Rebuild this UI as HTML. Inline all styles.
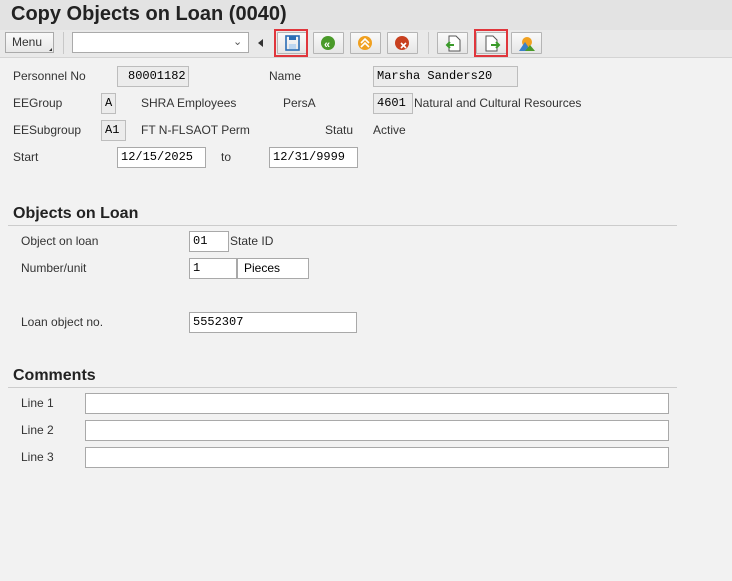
<!DOCTYPE html>
<html><head><meta charset="utf-8"><style>
*{margin:0;padding:0;box-sizing:border-box}
body{width:732px;height:581px;background:#f2f2f2;font-family:"Liberation Sans",Arial,sans-serif;font-size:12px;color:#333;position:relative;overflow:hidden}
.a{position:absolute}
.t{position:absolute;line-height:14px;white-space:nowrap}
.box{position:absolute;height:21px;border:1px solid #a9a9a9;background:#fff;font-family:"Liberation Mono",monospace;font-size:12px;line-height:19px;padding-left:3px;color:#000}
.ro{background:#ececec;border-color:#bdbdbd}
.btn{position:absolute;top:32px;width:31px;height:22px;border:1px solid #b5b5b5;background:linear-gradient(#fafafa,#e6e6e6);border-radius:1px}
.red{position:absolute;top:29px;height:28px;border:2px solid #e0363c}
.hdr{position:absolute;font-size:16px;font-weight:bold;color:#222}
.line{position:absolute;height:1px;background:#ccc}
</style></head><body>
<div class="a" style="left:0;top:0;width:732px;height:30px;background:#e3e3e3"></div>
<div class="t" style="left:11px;top:3px;font-size:20px;line-height:22px;font-weight:bold;color:#222">Copy Objects on Loan (0040)</div>
<div class="a" style="left:0;top:30px;width:732px;height:28px;background:#e9e9e9;border-bottom:1px solid #d4d4d4"></div>
<div class="a" style="left:5px;top:32px;width:49px;height:21px;border:1px solid #aaa;background:linear-gradient(#fafafa,#e8e8e8);font-size:12px;line-height:19px;padding-left:6px">Menu</div>
<div class="a" style="left:49px;top:48px;width:0;height:0;border-left:3px solid transparent;border-bottom:3px solid #333"></div>
<div class="a" style="left:63px;top:32px;width:1px;height:22px;background:#c8c8c8"></div>
<div class="a" style="left:72px;top:32px;width:177px;height:21px;border:1px solid #aaa;background:#fff"></div>
<div class="t" style="left:233px;top:35px;font-size:11px;color:#555">&#8964;</div>
<div class="a" style="left:258px;top:39px;width:0;height:0;border-top:4px solid transparent;border-bottom:4px solid transparent;border-right:5px solid #333"></div>

<div class="btn" style="left:277px"><svg width="29" height="20"><rect x="8" y="3" width="13" height="14" fill="none" stroke="#2a6db5" stroke-width="1.6"/><rect x="11" y="3" width="7" height="4" fill="#2a6db5"/><rect x="11" y="11" width="7" height="5" fill="#bcd6f0"/></svg></div>
<div class="red" style="left:274px;width:34px"></div>
<div class="btn" style="left:313px"><svg width="29" height="20"><circle cx="14" cy="10" r="7" fill="#4a9a2a"/><text x="10" y="15" font-size="11" fill="#fff" font-family="Liberation Sans" font-weight="bold">«</text></svg></div>
<div class="btn" style="left:350px"><svg width="29" height="20"><circle cx="14" cy="10" r="7" fill="#f0a020"/><path d="M10 10l4-4 4 4M10 14l4-4 4 4" stroke="#fff" stroke-width="1.6" fill="none"/></svg></div>
<div class="btn" style="left:387px"><svg width="29" height="20"><circle cx="14" cy="10" r="7" fill="#c8401f"/><path d="M13 10l5 5M18 10l-5 5" stroke="#fff" stroke-width="1.6"/></svg></div>
<div class="a" style="left:428px;top:32px;width:1px;height:22px;background:#c8c8c8"></div>
<div class="btn" style="left:437px"><svg width="29" height="20"><path d="M11 3h7l4 4v11H11z" fill="#fff" stroke="#555"/><path d="M16 12h-6M12 9l-3 3 3 3" stroke="#3a9a2a" stroke-width="2" fill="none"/></svg></div>
<div class="btn" style="left:476px"><svg width="29" height="20"><path d="M9 3h7l4 4v11H9z" fill="#fff" stroke="#555"/><path d="M14 12h7M19 9l3 3-3 3" stroke="#3a9a2a" stroke-width="2" fill="none"/></svg></div>
<div class="red" style="left:474px;width:34px"></div>
<div class="btn" style="left:511px"><svg width="29" height="20"><circle cx="15" cy="9" r="5" fill="#f0a020"/><path d="M7 18l6-9 6 9z" fill="#3a80c8"/><path d="M13 18l5-6 5 6z" fill="#4a9a2a"/></svg></div>

<div class="t" style="left:13px;top:69px">Personnel No</div>
<div class="box ro" style="left:117px;top:66px;width:72px;padding-left:10px">80001182</div>
<div class="t" style="left:269px;top:69px">Name</div>
<div class="box ro" style="left:373px;top:66px;width:145px">Marsha Sanders20</div>

<div class="t" style="left:13px;top:96px">EEGroup</div>
<div class="box ro" style="left:101px;top:93px;width:15px">A</div>
<div class="t" style="left:141px;top:96px">SHRA Employees</div>
<div class="t" style="left:283px;top:96px">PersA</div>
<div class="box ro" style="left:373px;top:93px;width:40px">4601</div>
<div class="t" style="left:414px;top:96px">Natural and Cultural Resources</div>

<div class="t" style="left:13px;top:123px">EESubgroup</div>
<div class="box ro" style="left:101px;top:120px;width:25px">A1</div>
<div class="t" style="left:141px;top:123px">FT N-FLSAOT Perm</div>
<div class="t" style="left:325px;top:123px">Statu</div>
<div class="t" style="left:373px;top:123px">Active</div>

<div class="t" style="left:13px;top:150px">Start</div>
<div class="box" style="left:117px;top:147px;width:89px">12/15/2025</div>
<div class="t" style="left:221px;top:150px">to</div>
<div class="box" style="left:269px;top:147px;width:89px">12/31/9999</div>

<div class="hdr" style="left:13px;top:205px">Objects on Loan</div>
<div class="line" style="left:8px;top:225px;width:669px"></div>
<div class="t" style="left:21px;top:234px">Object on loan</div>
<div class="box" style="left:189px;top:231px;width:40px">01</div>
<div class="t" style="left:230px;top:234px">State ID</div>
<div class="t" style="left:21px;top:261px">Number/unit</div>
<div class="box" style="left:189px;top:258px;width:48px">1</div>
<div class="box" style="left:237px;top:258px;width:72px;font-family:'Liberation Sans',sans-serif;padding-left:6px">Pieces</div>
<div class="t" style="left:21px;top:315px">Loan object no.</div>
<div class="box" style="left:189px;top:312px;width:168px">5552307</div>

<div class="hdr" style="left:13px;top:367px">Comments</div>
<div class="line" style="left:8px;top:387px;width:669px"></div>
<div class="t" style="left:21px;top:396px">Line 1</div>
<div class="box" style="left:85px;top:393px;width:584px"></div>
<div class="t" style="left:21px;top:423px">Line 2</div>
<div class="box" style="left:85px;top:420px;width:584px"></div>
<div class="t" style="left:21px;top:450px">Line 3</div>
<div class="box" style="left:85px;top:447px;width:584px"></div>
</body></html>
